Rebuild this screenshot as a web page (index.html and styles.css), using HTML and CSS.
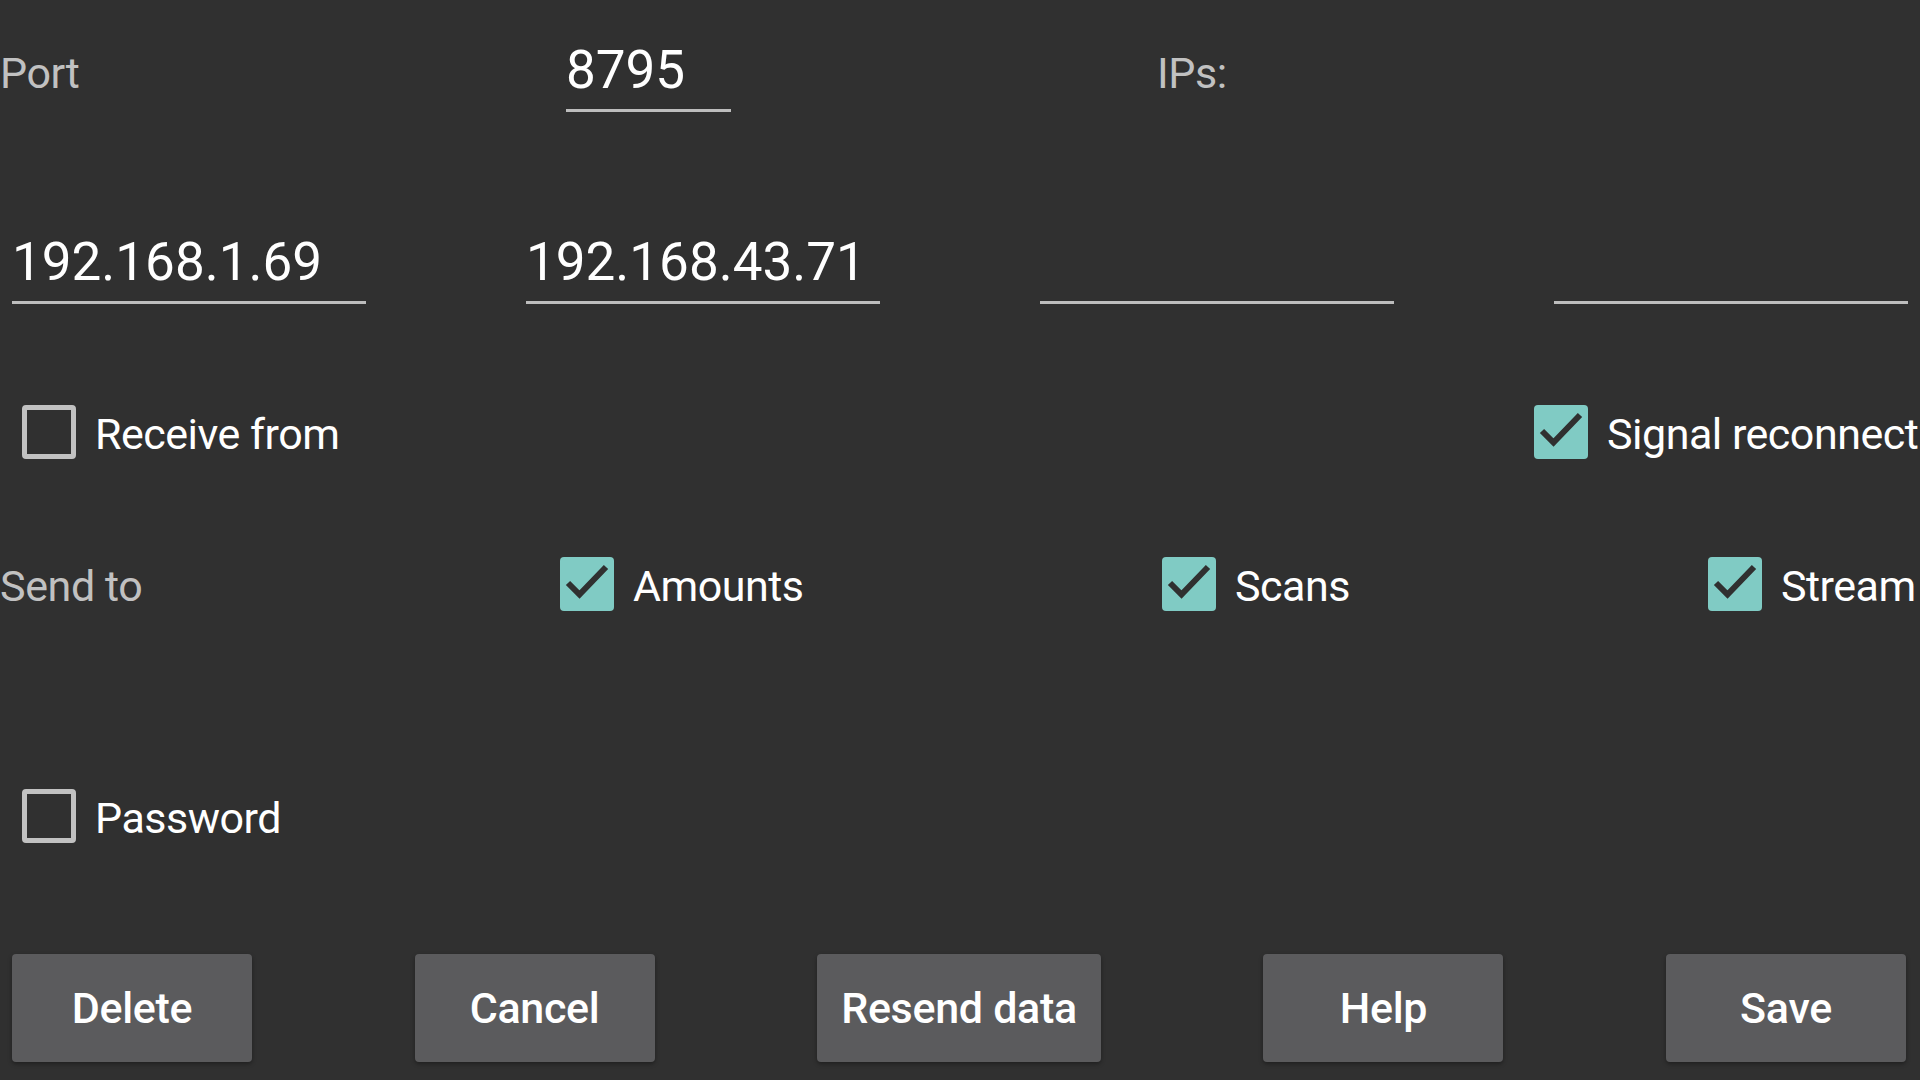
FILE: index.html
```html
<!DOCTYPE html>
<html lang="en">
<head>
<meta charset="utf-8">
<title>Connection settings</title>
<link rel="stylesheet" href="styles.css">
</head>
<body>
<div class="form">
  <div class="row-port">
    <div class="label label-port">Port</div>
    <div class="field field-port">8795</div>
    <div class="label label-ips">IPs:</div>
  </div>

  <div class="row-ips">
    <div class="field field-ip">192.168.1.69</div>
    <div class="field field-ip">192.168.43.71</div>
    <div class="field field-ip"></div>
    <div class="field field-ip"></div>
  </div>

  <div class="row-toggles">
    <label class="check check-indent"><span class="box box-off"></span><span class="check-text">Receive from</span></label>
    <label class="check"><span class="box box-on"><svg viewBox="0 0 54 54" width="54" height="54"><polyline points="8,26 19.5,37.5 46,10" /></svg></span><span class="check-text">Signal reconnect</span></label>
  </div>

  <div class="row-send">
    <div class="label label-send">Send to</div>
    <label class="check"><span class="box box-on"><svg viewBox="0 0 54 54" width="54" height="54"><polyline points="8,26 19.5,37.5 46,10" /></svg></span><span class="check-text">Amounts</span></label>
    <label class="check"><span class="box box-on"><svg viewBox="0 0 54 54" width="54" height="54"><polyline points="8,26 19.5,37.5 46,10" /></svg></span><span class="check-text">Scans</span></label>
    <label class="check"><span class="box box-on"><svg viewBox="0 0 54 54" width="54" height="54"><polyline points="8,26 19.5,37.5 46,10" /></svg></span><span class="check-text">Stream</span></label>
  </div>

  <div class="row-password">
    <label class="check check-indent"><span class="box box-off"></span><span class="check-text">Password</span></label>
  </div>

  <div class="row-buttons">
    <button class="btn">Delete</button>
    <button class="btn">Cancel</button>
    <button class="btn">Resend data</button>
    <button class="btn">Help</button>
    <button class="btn">Save</button>
  </div>
</div>
</body>
</html>
```

FILE: styles.css
```css
* { box-sizing: border-box; }

html, body {
  margin: 0;
  padding: 0;
}

body {
  width: 1920px;
  height: 1080px;
  overflow: hidden;
  background: #303030;
  color: #ffffff;
  font-family: Roboto, "Noto Sans", "Liberation Sans", sans-serif;
}

.form {
  display: flex;
  flex-direction: column;
}

.label {
  font-size: 43px;
  line-height: 54px;
  letter-spacing: -0.4px;
  color: #c1c1c1;
  white-space: nowrap;
}

.field {
  height: 73px;
  font-size: 53px;
  line-height: 62px;
  color: #ffffff;
  padding-bottom: 8px;
  border-bottom: 3px solid #bdbdbd;
  white-space: nowrap;
}

/* Row 1 */
.row-port {
  display: flex;
  align-items: baseline;
  padding-top: 39px;
}

.label-port {
  width: 566px;
}

.field-port {
  width: 165px;
}

.label-ips {
  margin-left: 426px;
}

/* Row 2 */
.row-ips {
  display: flex;
  justify-content: space-between;
  padding: 0 12px;
  margin-top: 119px;
}

.field-ip {
  width: 354px;
}

/* Checkboxes */
.check {
  display: flex;
  align-items: center;
  gap: 19px;
  height: 54px;
  font-size: 43px;
  letter-spacing: -0.5px;
  color: #ffffff;
  white-space: nowrap;
}

.check-text {
  height: 54px;
  line-height: 50px;
  padding-top: 4px;
}

.check-indent {
  padding-left: 22px;
}

.box {
  flex: none;
  width: 54px;
  height: 54px;
  border-radius: 4px;
  display: block;
}

.box-off {
  border: 5px solid #c1c1c1;
}

.box-on {
  background: #80cbc4;
}

.box-on svg {
  display: block;
}

.box-on polyline {
  fill: none;
  stroke: #303030;
  stroke-width: 6;
}

/* Row 3 */
.row-toggles {
  display: grid;
  grid-template-columns: 1534px 1fr;
  align-items: center;
  margin-top: 101px;
}

/* Row 4 */
.row-send {
  display: grid;
  grid-template-columns: 560px 602px 546px 1fr;
  align-items: center;
  margin-top: 98px;
}

.label-send {
  height: 54px;
  line-height: 50px;
  padding-top: 4px;
}

/* Row 5 */
.row-password {
  display: flex;
  margin-top: 178px;
}

/* Buttons */
.row-buttons {
  display: flex;
  justify-content: space-between;
  padding: 0 14px 0 12px;
  margin-top: 111px;
}

.btn {
  height: 108px;
  min-width: 240px;
  padding: 0 24px;
  border: none;
  border-radius: 4px;
  background: #5b5b5d;
  box-shadow: 0 2px 4px rgba(0, 0, 0, 0.35);
  color: #ffffff;
  font-family: Roboto, "Noto Sans", "Liberation Sans", sans-serif;
  font-size: 43px;
  font-weight: 500;
  letter-spacing: -0.3px;
}
```
